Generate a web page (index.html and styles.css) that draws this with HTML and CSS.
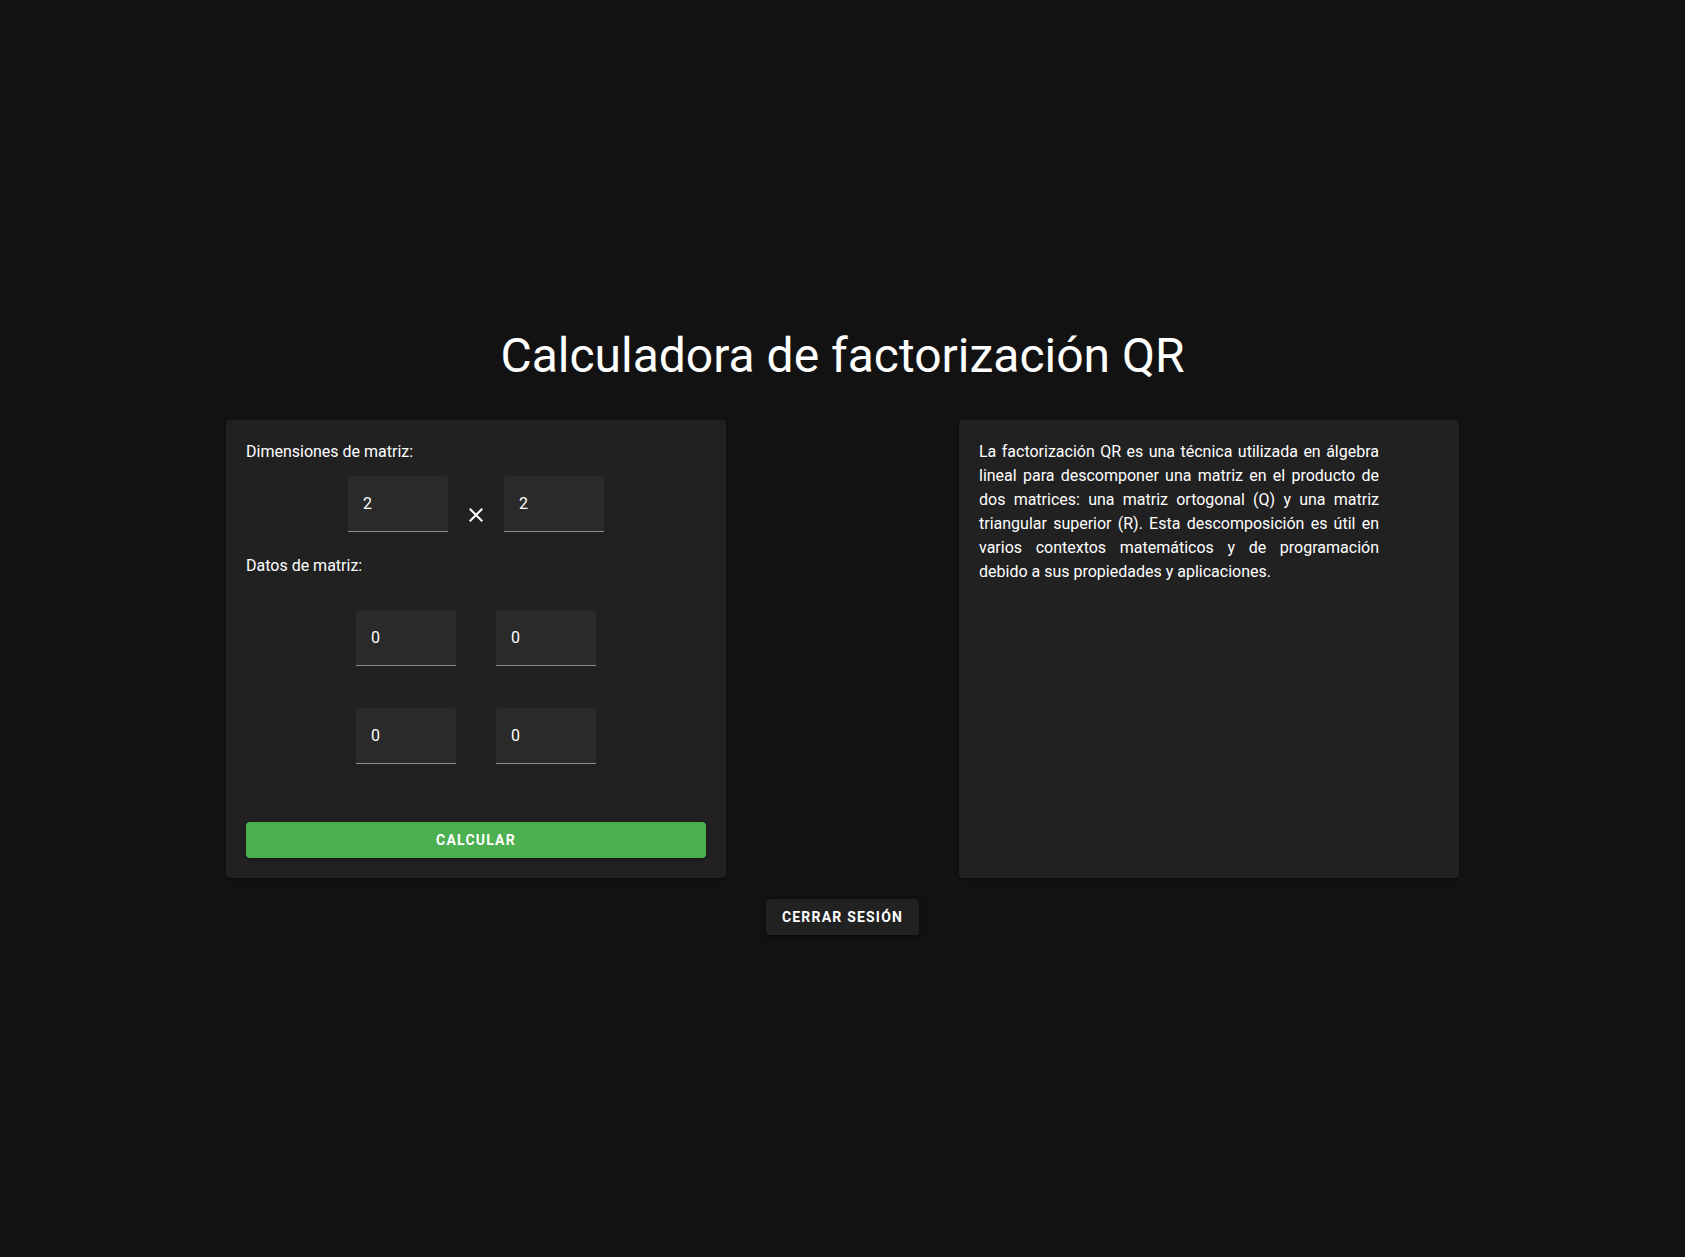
FILE: index.html
```html
<!DOCTYPE html>
<html lang="es">
<head>
<meta charset="utf-8">
<title>Calculadora de factorización QR</title>
<link rel="stylesheet" href="styles.css">
</head>
<body>
<main class="page">
  <h1 class="title">Calculadora de factorización QR</h1>
  <div class="cards">
    <section class="card calc">
      <p class="label">Dimensiones de matriz:</p>
      <div class="dims">
        <div class="field"><input class="input" type="text" value="2"></div>
        <svg class="times" width="24" height="24" viewBox="0 0 24 24" aria-hidden="true"><path fill="#fff" d="M19 6.41 17.59 5 12 10.59 6.41 5 5 6.41 10.59 12 5 17.59 6.41 19 12 13.41 17.59 19 19 17.59 13.41 12z"/></svg>
        <div class="field"><input class="input" type="text" value="2"></div>
      </div>
      <p class="label label-data">Datos de matriz:</p>
      <div class="matrix">
        <div class="field"><input class="input" type="text" value="0"></div>
        <div class="field"><input class="input" type="text" value="0"></div>
        <div class="field"><input class="input" type="text" value="0"></div>
        <div class="field"><input class="input" type="text" value="0"></div>
      </div>
      <button class="btn-calc" type="button">Calcular</button>
    </section>
    <section class="card info">
      <p class="desc">La factorización QR es una técnica utilizada en álgebra lineal para descomponer una matriz en el producto de dos matrices: una matriz ortogonal (Q) y una matriz triangular superior (R). Esta descomposición es útil en varios contextos matemáticos y de programación debido a sus propiedades y aplicaciones.</p>
    </section>
  </div>
  <button class="btn-logout" type="button">Cerrar sesión</button>
</main>
</body>
</html>
```

FILE: styles.css
```css
* { box-sizing: border-box; }

html, body {
  margin: 0;
  padding: 0;
  background: #121212;
  color: #ffffff;
  font-family: Roboto, "Liberation Sans", Arial, sans-serif;
}

.page {
  min-height: 100vh;
  display: flex;
  flex-direction: column;
  align-items: center;
  justify-content: center;
  padding-top: 6px;
}

.title {
  margin: 0 0 36px;
  font-size: 48px;
  font-weight: 400;
  line-height: 56px;
  color: #ffffff;
}

.cards {
  width: 1233px;
  display: flex;
  justify-content: space-between;
  align-items: stretch;
}

.card {
  width: 500px;
  background: #212121;
  border-radius: 4px;
  box-shadow: 0 2px 1px -1px rgba(0,0,0,0.2), 0 1px 1px 0 rgba(0,0,0,0.14), 0 1px 3px 0 rgba(0,0,0,0.12);
  padding: 20px;
}

.calc {
  display: flex;
  flex-direction: column;
}

.label {
  margin: 0;
  font-size: 16px;
  line-height: 24px;
  color: #ffffff;
}

.dims {
  margin-top: 12px;
  display: flex;
  justify-content: center;
  gap: 16px;
}

.times {
  align-self: flex-end;
  margin-bottom: 5px;
}

.label-data {
  margin-top: 22px;
}

.field {
  width: 100px;
  height: 56px;
  background: #2a2a2a;
  border-radius: 4px 4px 0 0;
  border-bottom: 1px solid #8c8c8c;
}

.input {
  display: block;
  width: 100%;
  height: 55px;
  border: 0;
  outline: none;
  background: transparent;
  color: #ffffff;
  font-family: Roboto, "Liberation Sans", Arial, sans-serif;
  font-size: 16px;
  padding: 0 15px 1px;
  line-height: 23px;
}

.matrix {
  margin: 32px auto 0;
  display: grid;
  grid-template-columns: 100px 100px;
  column-gap: 40px;
  row-gap: 42px;
}

.btn-calc {
  margin-top: 58px;
  height: 36px;
  width: 100%;
  border: 0;
  border-radius: 4px;
  background: #4caf50;
  color: #ffffff;
  font-family: Roboto, "Liberation Sans", Arial, sans-serif;
  font-size: 14px;
  font-weight: 700;
  letter-spacing: 1.2px;
  text-transform: uppercase;
  box-shadow: 0 3px 1px -2px rgba(0,0,0,0.2), 0 2px 2px 0 rgba(0,0,0,0.14), 0 1px 5px 0 rgba(0,0,0,0.12);
  cursor: pointer;
}

.desc {
  margin: 0;
  width: 400px;
  font-size: 16px;
  line-height: 24px;
  text-align: justify;
  color: #ffffff;
}

.btn-logout {
  margin-top: 21px;
  height: 36px;
  padding: 0 16px;
  border: 0;
  border-radius: 4px;
  background: #212121;
  color: #ffffff;
  font-family: Roboto, "Liberation Sans", Arial, sans-serif;
  font-size: 14px;
  font-weight: 700;
  letter-spacing: 1.2px;
  text-transform: uppercase;
  box-shadow: 0 3px 1px -2px rgba(0,0,0,0.2), 0 2px 2px 0 rgba(0,0,0,0.14), 0 1px 5px 0 rgba(0,0,0,0.12);
  cursor: pointer;
}
```
